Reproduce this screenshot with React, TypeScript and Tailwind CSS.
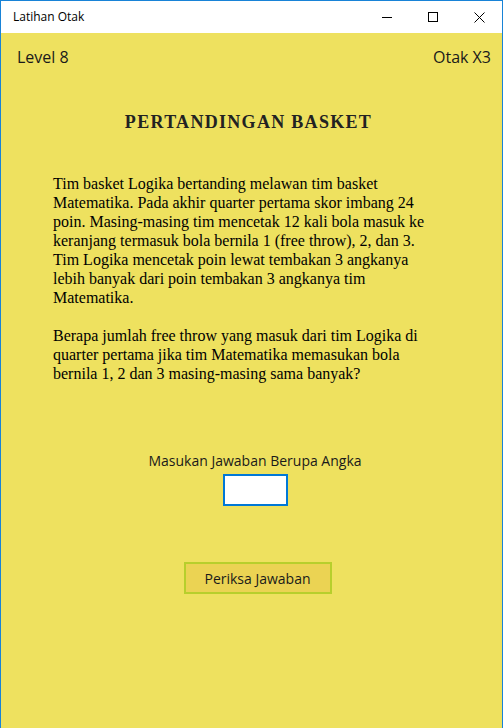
import React from 'react';

// --- window chrome ---
function TitleBar() {
    return (
        <div className="flex h-[32px] items-center bg-white">
            <span className="pl-[12px] text-[12px] text-black" style={{ fontFamily: '"Open Sans", "Noto Sans", sans-serif' }}>Latihan Otak</span>
            <div className="ml-auto flex h-full">
                <div className="flex w-[46px] items-center justify-center">
                    <svg width="10" height="10" viewBox="0 0 10 10"><path d="M0 5.5H10" stroke="#000" strokeWidth="1" /></svg>
                </div>
                <div className="flex w-[46px] items-center justify-center">
                    <svg width="10" height="10" viewBox="0 0 10 10"><rect x="0.5" y="0.5" width="9" height="9" fill="none" stroke="#000" strokeWidth="1" /></svg>
                </div>
                <div className="flex w-[46px] items-center justify-center">
                    <svg width="11" height="11" viewBox="0 0 11 11"><path d="M0.5 0.5L10.5 10.5M10.5 0.5L0.5 10.5" stroke="#000" strokeWidth="1" /></svg>
                </div>
            </div>
        </div>
    );
}

export default function App() {
    const ui = { fontFamily: '"Open Sans", "Noto Sans", sans-serif' };
    const serif = { fontFamily: '"Liberation Serif", "Times New Roman", serif' };

    return (
        <div className="flex h-[728px] w-[503px] flex-col overflow-hidden border border-[#1883d7] border-b-0">
            <TitleBar />

            <div className="flex flex-1 flex-col bg-[#eee15f] text-[#1a1a1a]">
                {/* Header row */}
                <div className="flex items-center justify-between pl-[16px] pr-[11px] pt-[12px] text-[16px]" style={ui}>
                    <span>Level 8</span>
                    <span>Otak X3</span>
                </div>

                {/* Title */}
                <h1 className="mt-[40px] pr-[6px] text-center text-[18px] font-bold uppercase tracking-[1.3px] text-[#222]" style={serif}>
                    Pertandingan Basket
                </h1>

                {/* Question */}
                <div className="ml-[52px] mt-[38px] w-[385px] text-[16px] leading-[19px] text-black" style={serif}>
                    <p>
                        Tim basket Logika bertanding melawan tim basket Matematika. Pada akhir quarter pertama skor imbang 24 poin. Masing-masing tim mencetak 12 kali bola masuk ke keranjang termasuk bola bernila 1 (free throw), 2, dan 3. Tim Logika mencetak poin lewat tembakan 3 angkanya lebih banyak dari poin tembakan 3 angkanya tim Matematika.
                    </p>
                    <p className="mt-[19px]">
                        Berapa jumlah free throw yang masuk dari tim Logika di quarter pertama jika tim Matematika memasukan bola bernila 1, 2 dan 3 masing-masing sama banyak?
                    </p>
                </div>

                {/* Answer */}
                <div className="mt-[68px] flex flex-col items-center pl-[7px]" style={ui}>
                    <span className="text-[14px] leading-[20px]">Masukan Jawaban Berupa Angka</span>
                    <input className="mt-[3px] h-[32px] w-[65px] border-2 border-[#0078d7] bg-white px-1 outline-none" />
                    <button className="ml-[5px] mt-[56px] h-[32px] w-[148px] border-2 border-[#b7cf2c] bg-[#ebd353] text-[14px]">
                        Periksa Jawaban
                    </button>
                </div>
            </div>
        </div>
    );
}
